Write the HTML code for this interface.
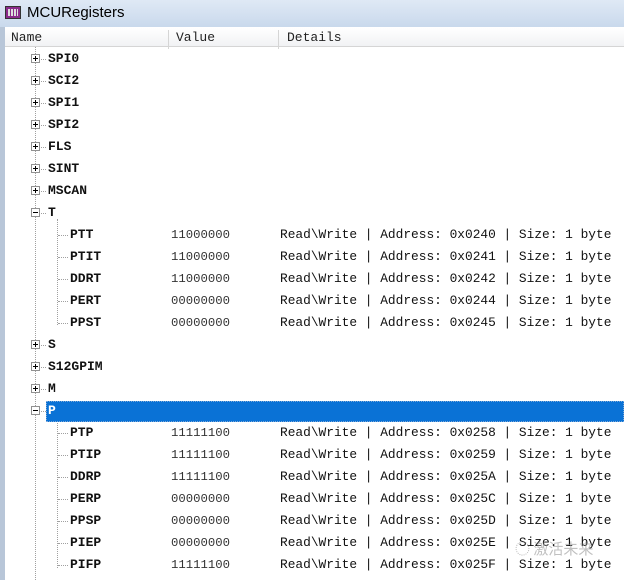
<!DOCTYPE html>
<html><head><meta charset="utf-8"><style>
*{margin:0;padding:0;box-sizing:border-box}
body{width:624px;height:580px;overflow:hidden;background:#fff;position:relative;font-family:"Liberation Mono",monospace}
.title{position:absolute;left:0;top:0;width:624px;height:27px;background:linear-gradient(#dfe9f5,#c9d9ec);font-family:"Liberation Sans",sans-serif;font-size:15px;color:#000}
.title span{position:absolute;left:27px;top:4px}
.ico{position:absolute;left:5px;top:6px;width:16px;height:13px;border:1px solid #333;background:#8a2a8a}
.ico:before{content:"";position:absolute;left:2px;top:2px;width:10px;height:7px;background:repeating-linear-gradient(90deg,#ddd 0 2px,#8a2a8a 2px 3px)}
.frame{position:absolute;left:0;top:27px;width:624px;height:553px;border-left:5px solid #b8c6d8;background:#fff}
.hdr{position:absolute;left:5px;top:28px;width:619px;height:19px;background:linear-gradient(#fff,#f1f2f4);border-bottom:1px solid #d5d5d5;font-size:13px;color:#222}
.hdr div{position:absolute;top:2px}
.sep{position:absolute;top:0;width:1px;height:19px;background:#d5d5d5}
.r{position:absolute;font-size:12.85px;line-height:14px;white-space:pre;color:#111}
.b{font-weight:bold;font-size:13px}
.v{color:#333;font-size:12.3px}
.box{position:absolute;width:9px;height:9px;border:1px solid #919191;background:#fff}
.box:before{content:"";position:absolute;left:1px;top:3px;width:5px;height:1px;background:#000}
.plus:after{content:"";position:absolute;left:3px;top:1px;width:1px;height:5px;background:#000}
.dv{position:absolute;width:0;border-left:1px dotted #a0a0a0}
.dh{position:absolute;height:0;border-top:1px dotted #a0a0a0}
.sel{position:absolute;left:46px;top:401px;width:578px;height:21px;background:#0a72d6;border:1px dotted #7fa9d8}
</style></head><body>
<div class="title"><div class="ico"></div><span>MCURegisters</span></div>
<div class="frame"></div>
<div class="hdr"><div style="left:6px">Name</div><div style="left:171px">Value</div><div style="left:282px">Details</div>
<div class="sep" style="left:163px"></div><div class="sep" style="left:273px"></div></div>
<div class="dv" style="left:35px;top:47px;height:533px"></div>
<div class="dv" style="left:57px;top:219px;height:106px"></div>
<div class="dv" style="left:57px;top:418px;height:150px"></div>
<div class="sel"></div>
<div id="rows"></div>
<script>
var items=[["SPI0",0],["SCI2",0],["SPI1",0],["SPI2",0],["FLS",0],["SINT",0],["MSCAN",0],["T",1],
["PTT",2,"11000000","0240"],["PTIT",2,"11000000","0241"],["DDRT",2,"11000000","0242"],["PERT",2,"00000000","0244"],["PPST",2,"00000000","0245"],
["S",0],["S12GPIM",0],["M",0],["P",1],
["PTP",2,"11111100","0258"],["PTIP",2,"11111100","0259"],["DDRP",2,"11111100","025A"],["PERP",2,"00000000","025C"],["PPSP",2,"00000000","025D"],["PIEP",2,"00000000","025E"],["PIFP",2,"11111100","025F"]];
var h="";
items.forEach(function(it,i){
 var cy=59+i*22;
 if(it[1]<2){
  h+='<div class="box'+(it[1]==0?' plus':'')+'" style="left:31px;top:'+(cy-5)+'px"></div>';
  h+='<div class="dh" style="left:41px;top:'+cy+'px;width:5px"></div>';
  h+='<div class="r b" style="left:48px;top:'+(cy-7)+'px;'+(it[0]=="P"?'color:#fff':'')+'">'+it[0]+'</div>';
 }else{
  h+='<div class="dh" style="left:58px;top:'+cy+'px;width:10px"></div>';
  h+='<div class="r b" style="left:70px;top:'+(cy-7)+'px">'+it[0]+'</div>';
  h+='<div class="r v" style="left:171px;top:'+(cy-7)+'px">'+it[2]+'</div>';
  h+='<div class="r" style="left:280px;top:'+(cy-7)+'px">Read\\Write | Address: 0x'+it[3]+' | Size: 1 byte</div>';
 }
});
document.getElementById("rows").innerHTML=h;
</script>
<div style="position:absolute;left:515px;top:538px;font-family:'Noto Sans CJK SC',sans-serif;font-size:15px;color:rgba(150,150,150,0.6)">◌ 激活未来</div>
</body></html>
